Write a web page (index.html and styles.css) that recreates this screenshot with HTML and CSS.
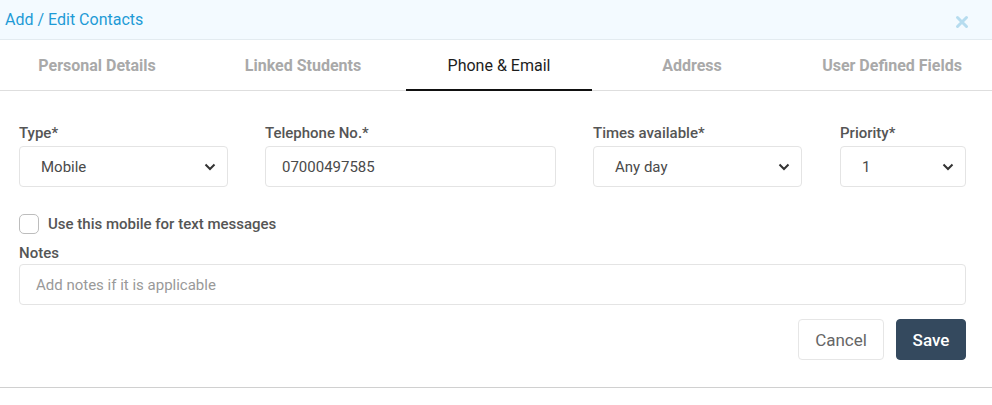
FILE: index.html
```html
<!DOCTYPE html>
<html>
<head>
<meta charset="utf-8">
<link rel="stylesheet" href="styles.css">
</head>
<body>
<div class="modal">
  <div class="header">
    <div class="title">Add / Edit Contacts</div>
    <div class="close">
      <svg width="14" height="14" viewBox="0 0 14 14"><path d="M2.5 2.5 L11.5 11.5 M11.5 2.5 L2.5 11.5" stroke="#b6dcef" stroke-width="3" stroke-linecap="round"/></svg>
    </div>
  </div>
  <div class="tabs">
    <div class="tab t1">Personal Details</div>
    <div class="tab t2">Linked Students</div>
    <div class="tab t3 active">Phone &amp; Email</div>
    <div class="tab t4">Address</div>
    <div class="tab t5">User Defined Fields</div>
  </div>
  <div class="body">
    <div class="row">
      <div class="field">
        <label class="lbl">Type*</label>
        <div class="control select"><span>Mobile</span><svg class="chev" width="12" height="8" viewBox="0 0 12 8"><path d="M1.5 1.5 L6 6 L10.5 1.5" fill="none" stroke="#333" stroke-width="2"/></svg></div>
      </div>
      <div class="field">
        <label class="lbl">Telephone No.*</label>
        <div class="control input"><span>07000497585</span></div>
      </div>
      <div class="field">
        <label class="lbl">Times available*</label>
        <div class="control select"><span>Any day</span><svg class="chev" width="12" height="8" viewBox="0 0 12 8"><path d="M1.5 1.5 L6 6 L10.5 1.5" fill="none" stroke="#333" stroke-width="2"/></svg></div>
      </div>
      <div class="field prio">
        <label class="lbl">Priority*</label>
        <div class="control select"><span>1</span><svg class="chev" width="12" height="8" viewBox="0 0 12 8"><path d="M1.5 1.5 L6 6 L10.5 1.5" fill="none" stroke="#333" stroke-width="2"/></svg></div>
      </div>
    </div>
    <div class="check-row">
      <span class="checkbox"></span>
      <span class="check-lbl">Use this mobile for text messages</span>
    </div>
    <label class="lbl notes-lbl">Notes</label>
    <div class="control input notes"><span class="ph">Add notes if it is applicable</span></div>
    <div class="actions">
      <button class="btn cancel">Cancel</button>
      <button class="btn save">Save</button>
    </div>
  </div>
  <div class="footer-line"></div>
</div>
</body>
</html>
```
FILE: styles.css
```css
* { box-sizing: border-box; }
html, body { margin: 0; padding: 0; background: #fff; }
body { font-family: Roboto, "Liberation Sans", Arial, sans-serif; width: 992px; height: 405px; overflow: hidden; }
.modal { width: 992px; }
.header {
  height: 40px;
  background: #f3faff;
  border-bottom: 1px solid #e3ebf0;
  display: flex;
  align-items: center;
  justify-content: space-between;
  padding: 0 23px 0 5px;
}
.title { color: #1e9ad6; font-size: 16px; line-height: 20px; margin-top: 0; }
.close { display: flex; align-items: center; margin-top: 5px; }
.tabs { display: flex; height: 51px; border-bottom: 1px solid #dedede; }
.tab {
  display: flex;
  align-items: center;
  justify-content: center;
  font-size: 16px;
  font-weight: 700;
  color: #a9a9a9;
  padding-top: 1px;
}
.t1 { flex: 0 0 200px; padding-right: 6px; }
.t2 { flex: 0 0 206px; }
.t3 { flex: 0 0 186px; }
.t4 { flex: 0 0 200px; }
.t5 { flex: 0 0 200px; }
.tab.active {
  color: #1d1d1d;
  font-weight: 400;
  border-bottom: 2px solid #111;
  margin-bottom: -1px;
  padding-top: 2px;
}
.body { padding: 33px 26px 0 19px; }
.row {
  display: grid;
  grid-template-columns: 209px 291px 209px 127px;
  column-gap: 37px;
}
.prio { margin-left: 1px; }
.field { display: flex; flex-direction: column; }
.lbl {
  font-size: 15px;
  font-weight: 500;
  color: #555;
  line-height: 18px;
  margin-bottom: 4px;
  display: block;
}
.control {
  height: 41px;
  border: 1px solid #e4e4e4;
  border-radius: 4px;
  display: flex;
  align-items: center;
  font-size: 15px;
  color: #4a4a4a;
  background: #fff;
}
.select { padding: 0 11px 0 21px; justify-content: space-between; }
.input { padding: 0 16px; }
.chev { margin-top: 1px; }
.check-row { display: flex; align-items: center; margin-top: 27px; height: 20px; }
.checkbox {
  width: 20px; height: 20px;
  border: 1px solid #bdbdbd;
  border-radius: 5px;
  margin-right: 9px;
}
.check-lbl { font-size: 15px; font-weight: 500; color: #555; }
.notes-lbl { margin-top: 10px; margin-bottom: 2px; }
.notes { width: 947px; }
.ph { color: #999; }
.actions { display: flex; justify-content: flex-end; gap: 12px; margin-top: 14px; width: 947px; }
.btn {
  height: 41px;
  border-radius: 4px;
  font-family: Roboto, "Liberation Sans", Arial, sans-serif;
  font-size: 17px;
  cursor: pointer;
}
.cancel { width: 86px; background: #fff; border: 1px solid #e6e6e6; color: #666; }
.save { width: 70px; background: #34495e; border: 1px solid #34495e; color: #fff; font-weight: 500; }
.footer-line { margin-top: 27px; height: 1px; background: #d0d0d0; }
```
